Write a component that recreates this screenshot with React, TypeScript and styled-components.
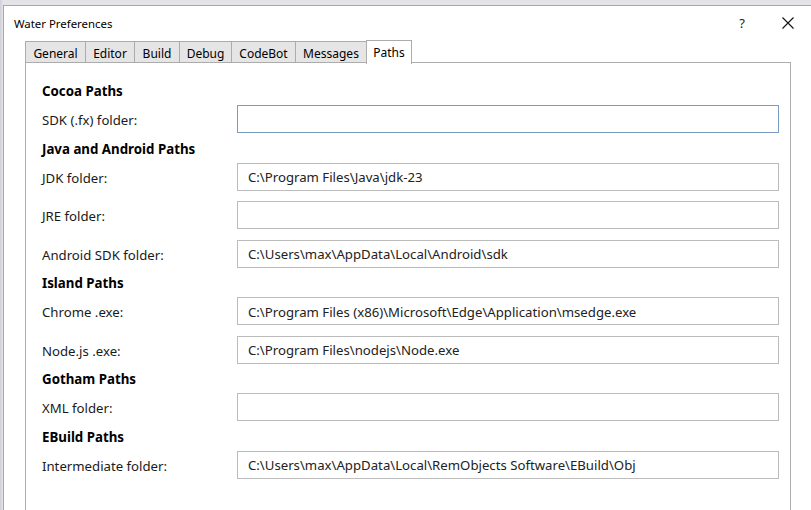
import React from "react";
import styled, { createGlobalStyle } from "styled-components";

const Global = createGlobalStyle`
  html, body { margin: 0; padding: 0; }
  body {
    background: linear-gradient(180deg, #e9e9ea 0px, #dcdcde 6px);
    font-family: "Segoe UI", "Noto Sans", "Open Sans", sans-serif;
    overflow: hidden;
  }
  #root { width: 811px; height: 510px; overflow: hidden; }
`;

const Screen = styled.div`
  width: 811px;
  height: 510px;
  padding: 5px 0 0 3px;
  box-sizing: border-box;
  background: linear-gradient(90deg, #cfcfd8 0px, #e4e4e8 3px);
`;

const Window = styled.div`
  background: #ffffff;
  border-top: 1px solid #a8a8a8;
  border-left: 1px solid #a8a8a8;
  height: 600px;
  box-sizing: border-box;
`;

const TitleBar = styled.div`
  height: 34px;
  display: flex;
  align-items: center;
  padding-left: 10px;
  font-size: 11.4px;
  color: #000;
`;

const Title = styled.div`
  flex: 1;
  padding-top: 1px;
`;

const TitleButton = styled.div`
  width: 46px;
  height: 34px;
  display: flex;
  align-items: center;
  justify-content: center;
  font-size: 13px;
  color: #222;
`;

const Body = styled.div`
  padding-left: 21px;
`;

const TabStrip = styled.div`
  display: flex;
  align-items: flex-end;
  height: 23px;
  position: relative;
  z-index: 1;
`;

const Tab = styled.div<{ $w: number; $active?: boolean }>`
  width: ${(p) => p.$w}px;
  height: ${(p) => (p.$active ? 24 : 22)}px;
  box-sizing: border-box;
  margin-left: -1px;
  margin-bottom: ${(p) => (p.$active ? -1 : 0)}px;
  border: 1px solid #acacac;
  border-bottom: ${(p) => (p.$active ? "none" : "1px solid #acacac")};
  background: ${(p) => (p.$active ? "#ffffff" : "#e5e5e5")};
  display: flex;
  align-items: center;
  justify-content: center;
  padding-top: ${(p) => (p.$active ? 1 : 2)}px;
  padding-bottom: ${(p) => (p.$active ? 2 : 0)}px;
  font-size: 12px;
  color: #000;
  &:first-child { margin-left: 0; }
`;

const Panel = styled.div`
  width: 766px;
  box-sizing: border-box;
  margin-top: -1px;
  border: 1px solid #acacac;
  padding: 12.5px 11px 40px 16px;
  height: 520px;
  display: flex;
  flex-direction: column;
`;

const Heading = styled.div`
  height: 29.5px;
  box-sizing: border-box;
  padding-top: 2px;
  display: flex;
  align-items: center;
  font-size: 13.3px;
  font-weight: 700;
  color: #000;
`;

const Row = styled.div`
  height: 28px;
  display: grid;
  grid-template-columns: 195px 1fr;
  align-items: center;
  & + & { margin-top: 10.5px; }
`;

const Label = styled.div`
  font-size: 13.2px;
  color: #1a1a1a;
  padding-top: 2px;
`;

const Field = styled.div<{ $focused?: boolean }>`
  height: 28px;
  box-sizing: border-box;
  border: 1px solid ${(p) => (p.$focused ? "#7b9cc2" : "#bcbcbc")};
  padding: 1px 0 0 10px;
  display: flex;
  align-items: center;
  font-size: 13.2px;
  color: #222;
  white-space: nowrap;
  overflow: hidden;
`;

const CloseIcon = () => (
  <svg width="12" height="12" viewBox="0 0 12 12">
    <path d="M0.5 0.5 L11.5 11.5 M11.5 0.5 L0.5 11.5" stroke="#111" strokeWidth="1.1" fill="none" />
  </svg>
);

type Entry = { label: string; value: string; focused?: boolean };
type Section = { title: string; entries: Entry[] };

const sections: Section[] = [
  { title: "Cocoa Paths", entries: [{ label: "SDK (.fx) folder:", value: "", focused: true }] },
  {
    title: "Java and Android Paths",
    entries: [
      { label: "JDK folder:", value: "C:\\Program Files\\Java\\jdk-23" },
      { label: "JRE folder:", value: "" },
      { label: "Android SDK folder:", value: "C:\\Users\\max\\AppData\\Local\\Android\\sdk" },
    ],
  },
  {
    title: "Island Paths",
    entries: [
      { label: "Chrome .exe:", value: "C:\\Program Files (x86)\\Microsoft\\Edge\\Application\\msedge.exe" },
      { label: "Node.js .exe:", value: "C:\\Program Files\\nodejs\\Node.exe" },
    ],
  },
  { title: "Gotham Paths", entries: [{ label: "XML folder:", value: "" }] },
  {
    title: "EBuild Paths",
    entries: [
      { label: "Intermediate folder:", value: "C:\\Users\\max\\AppData\\Local\\RemObjects Software\\EBuild\\Obj" },
    ],
  },
];

const tabs: { name: string; w: number }[] = [
  { name: "General", w: 61 },
  { name: "Editor", w: 50 },
  { name: "Build", w: 46 },
  { name: "Debug", w: 53 },
  { name: "CodeBot", w: 65 },
  { name: "Messages", w: 72 },
  { name: "Paths", w: 46 },
];

export default function App() {
  return (
    <>
      <Global />
      <Screen>
        <Window>
          <TitleBar>
            <Title>Water Preferences</Title>
            <TitleButton>?</TitleButton>
            <TitleButton>
              <CloseIcon />
            </TitleButton>
          </TitleBar>
          <Body>
            <TabStrip>
              {tabs.map((t) => (
                <Tab key={t.name} $w={t.w} $active={t.name === "Paths"}>
                  {t.name}
                </Tab>
              ))}
            </TabStrip>
            <Panel>
              {sections.map((s) => (
                <React.Fragment key={s.title}>
                  <Heading>{s.title}</Heading>
                  {s.entries.map((e) => (
                    <Row key={e.label}>
                      <Label>{e.label}</Label>
                      <Field $focused={e.focused}>{e.value}</Field>
                    </Row>
                  ))}
                </React.Fragment>
              ))}
            </Panel>
          </Body>
        </Window>
      </Screen>
    </>
  );
}
